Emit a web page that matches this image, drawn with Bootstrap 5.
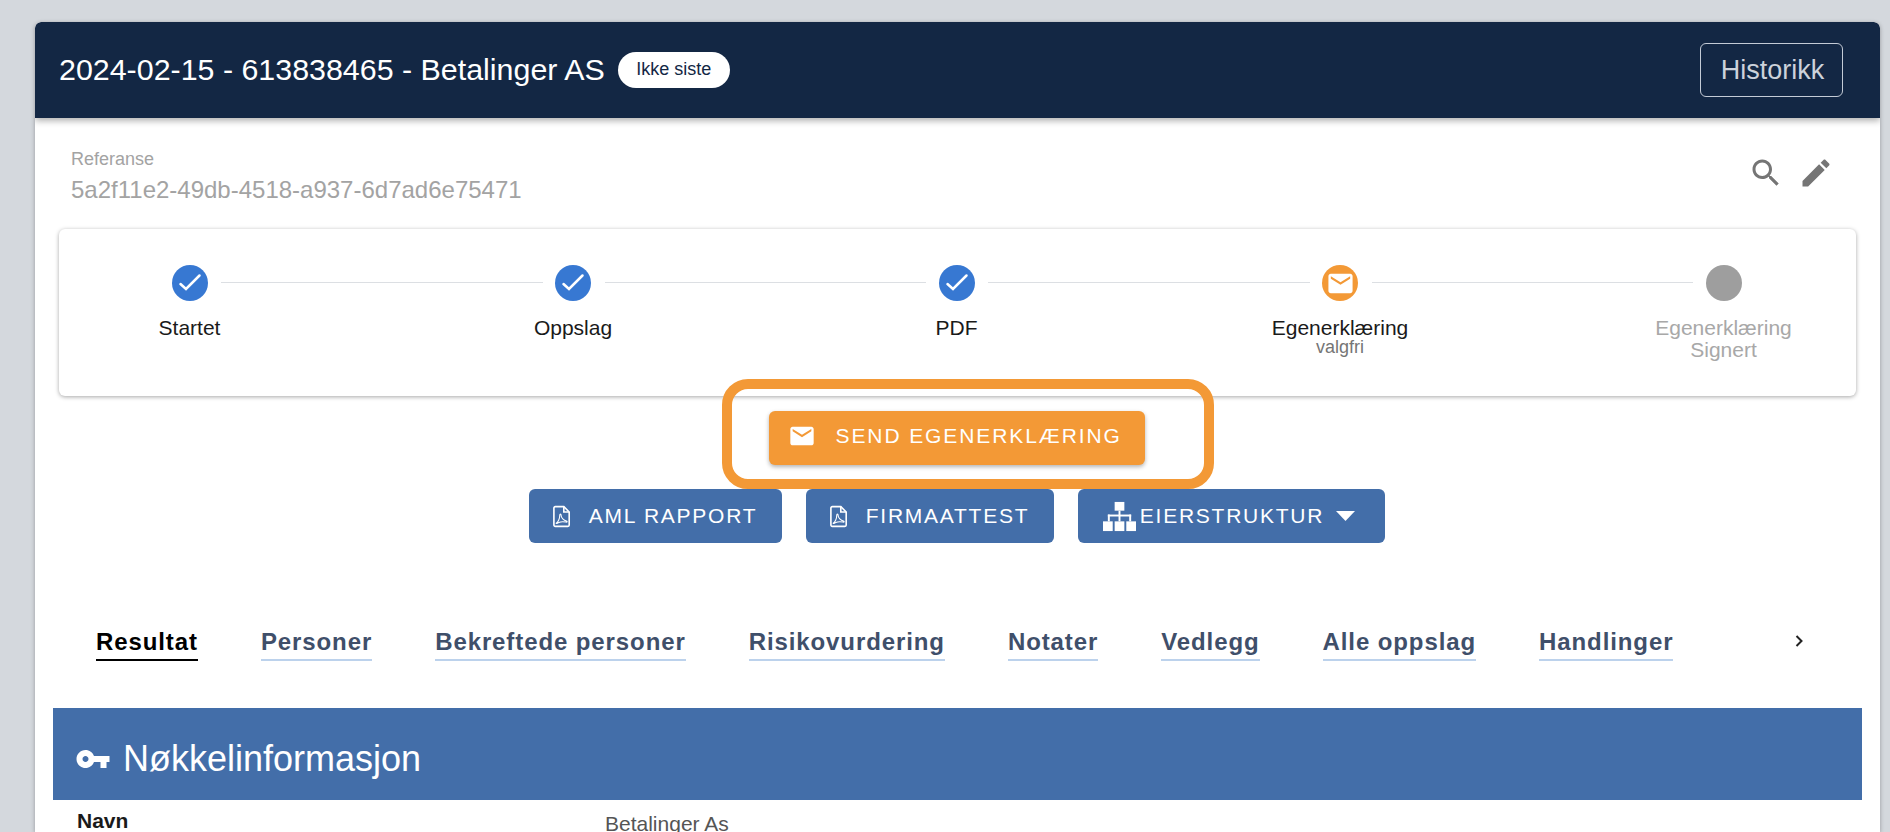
<!DOCTYPE html>
<html lang="nb">
<head>
  <meta charset="UTF-8">
  <meta name="viewport" content="width=device-width, initial-scale=1.0">
  <title>Betalinger AS</title>
  <link href="https://cdn.jsdelivr.net/npm/bootstrap@5.3.0/dist/css/bootstrap.min.css" rel="stylesheet">
  <style>
    html, body { height: 100%; overflow: hidden; }
    body {
      background: #d4d8dd;
      font-family: "Liberation Sans", Arial, sans-serif;
      padding: 22px 10px 0 35px;
    }

    .sak-card {
      border: 0;
      border-radius: 6px 6px 0 0;
      height: 810px;
      overflow: hidden;
      box-shadow: 0 1px 4px rgba(0, 0, 0, .3);
    }
    .sak-card > * { flex: none; }

    .sak-head {
      background: #132744;
      color: #fff;
      height: 96px;
      padding: 0 37px 0 24px;
      border: 0;
      border-radius: 6px 6px 0 0 !important;
      box-shadow: 0 3px 6px rgba(0, 0, 0, .3);
    }
    .sak-title { font-size: 30.4px; font-weight: 400; margin: 0 0 2px; }
    .pill-siste {
      background: #fff;
      color: #132744;
      font-size: 18px;
      height: 36px;
      width: 112px;
      border-radius: 18px;
      margin-left: 13px;
    }
    .btn-historikk {
      width: 143px;
      height: 54px;
      font-size: 27px;
      color: #ccd2db;
      border: 1px solid #c4cbd6;
      border-radius: 6px;
      padding: 0 0 0 2px;
    }

    .ref-row { padding: 31px 46px 0 36px; height: 111px; }
    .ref-label { font-size: 18px; color: #a3a3a3; line-height: 20px; }
    .ref-value { font-size: 24px; color: #a3a3a3; line-height: 30px; margin-top: 6px; }
    .ref-icons { gap: 14px; padding-top: 6px; color: #757575; }

    .stepper-paper {
      margin: 0 24px 0 24px;
      height: 167px;
      background: #fff;
      border-radius: 6px;
      padding: 36px 102px 0 100px;
      box-shadow: 0 1px 4px rgba(0, 0, 0, .35);
    }
    .step-item { width: 61px; flex: none; text-align: center; }
    .step-dot {
      width: 36px;
      height: 36px;
      border-radius: 50%;
      margin: 0 auto;
      background: #3778d2;
    }
    .step-dot.is-wait { background: #f39936; }
    .step-dot.is-off { background: #9e9e9e; }
    .step-line { flex: 1; height: 1px; background: #dcdfe3; margin: 17px 0 0 1px; }
    .step-label {
      margin: 16px -100px 0;
      font-size: 21px;
      line-height: 22px;
      color: #1a1a1a;
    }
    .step-label.is-off { color: #a8a8a8; }
    .step-sub { display: block; font-size: 18px; line-height: 16px; color: #757575; }

    .action-zone { position: relative; padding: 15px 2px 0 0; }
    .send-mark {
      position: absolute;
      left: 687px;
      top: -17px;
      width: 492px;
      height: 110px;
      border: 10px solid #f39936;
      border-radius: 26px;
      pointer-events: none;
    }
    .btn-act {
      height: 54px;
      color: #fff;
      font-size: 21px;
      letter-spacing: 1.75px;
      border: 0;
      border-radius: 6px;
      padding: 0;
      background: #436ea9;
      white-space: nowrap;
    }
    .btn-act:hover { background: #436ea9; color: #fff; }
    .btn-send {
      width: 376px;
      background: #f39936;
      letter-spacing: 1.9px;
      padding: 0 0 4px 19px;
      box-shadow: 0 2px 4px rgba(0, 0, 0, .3);
    }
    .btn-send:hover { background: #f39936; }
    .btn-send svg { margin-right: 20px; }
    .act-row { gap: 24px; margin-top: 24px; }
    .act-aml { width: 253px; }
    .act-firma { width: 248px; }
    .act-eier { width: 307px; padding-right: 4px; }
    .pdf-ico { margin-right: 18px; }
    .act-arrow { margin-left: 12px; }

    .tab-strip { margin: 85px 0 0 61px; height: 80px; position: relative; }
    .tab-item {
      font-size: 24px;
      font-weight: 700;
      letter-spacing: .9px;
      line-height: 28px;
      color: #3f4f6a;
      border-bottom: 2px solid #bcd2ec;
      padding-bottom: 3px;
      margin-right: 63px;
      white-space: nowrap;
      text-decoration: none;
    }
    .tab-item.is-on { color: #000; border-color: #000; }
    .tab-next { position: absolute; left: 1693px; top: 3px; }

    .section-bar {
      background: #436ea9;
      color: #fff;
      height: 92px;
      margin: 0 18px;
      padding: 10px 0 0 22px;
    }
    .section-bar h2 { font-size: 36px; font-weight: 400; margin: 0 0 0 12px; }
    .info-row { margin: 0 18px; padding: 11px 0 0 24px; }
    .info-key { width: 528px; font-size: 21px; font-weight: 700; color: #1a1a1a; line-height: 20px; }
    .info-val { font-size: 21px; color: #555; line-height: 26px; }
  </style>
</head>
<body>
  <div class="card sak-card">
    <div class="card-header sak-head d-flex align-items-center justify-content-between">
      <div class="d-flex align-items-center">
        <h1 class="sak-title">2024-02-15 - 613838465 - Betalinger AS</h1>
        <span class="pill-siste d-inline-flex align-items-center justify-content-center">Ikke siste</span>
      </div>
      <button type="button" class="btn btn-historikk">Historikk</button>
    </div>

    <!-- Referanse -->
    <div class="ref-row d-flex justify-content-between">
      <div>
        <div class="ref-label">Referanse</div>
        <div class="ref-value">5a2f11e2-49db-4518-a937-6d7ad6e75471</div>
      </div>
      <div class="ref-icons d-flex align-items-start">
        <svg width="36" height="36" viewBox="0 0 24 24" fill="currentColor"><path d="M15.5 14h-.79l-.28-.27C15.41 12.59 16 11.11 16 9.5 16 5.91 13.09 3 9.5 3S3 5.91 3 9.5 5.91 16 9.5 16c1.61 0 3.09-.59 4.23-1.57l.27.28v.79l5 4.99L20.49 19l-4.99-5zm-6 0C7.01 14 5 11.99 5 9.5S7.01 5 9.5 5 14 7.01 14 9.5 11.99 14 9.5 14z"/></svg>
        <svg width="36" height="36" viewBox="0 0 24 24" fill="currentColor"><path d="M3 17.25V21h3.75L17.81 9.94l-3.75-3.75L3 17.25zM20.71 7.04c.39-.39.39-1.02 0-1.41l-2.34-2.34c-.39-.39-1.02-.39-1.41 0l-1.83 1.83 3.75 3.75 1.83-1.83z"/></svg>
      </div>
    </div>

    <!-- Steg -->
    <div class="stepper-paper d-flex align-items-start">
      <div class="step-item">
        <div class="step-dot d-flex align-items-center justify-content-center">
          <svg width="24" height="24" viewBox="0 0 24 24" fill="none" stroke="#fff" stroke-width="2.5" stroke-linecap="round"><path d="M2.500 13l5.500 5L21.500 4.500"/></svg>
        </div>
        <div class="step-label">Startet</div>
      </div>
      <div class="step-line"></div>
      <div class="step-item">
        <div class="step-dot d-flex align-items-center justify-content-center">
          <svg width="24" height="24" viewBox="0 0 24 24" fill="none" stroke="#fff" stroke-width="2.5" stroke-linecap="round"><path d="M2.500 13l5.500 5L21.500 4.500"/></svg>
        </div>
        <div class="step-label">Oppslag</div>
      </div>
      <div class="step-line"></div>
      <div class="step-item">
        <div class="step-dot d-flex align-items-center justify-content-center">
          <svg width="24" height="24" viewBox="0 0 24 24" fill="none" stroke="#fff" stroke-width="2.5" stroke-linecap="round"><path d="M2.500 13l5.500 5L21.500 4.500"/></svg>
        </div>
        <div class="step-label">PDF</div>
      </div>
      <div class="step-line"></div>
      <div class="step-item">
        <div class="step-dot is-wait d-flex align-items-center justify-content-center">
          <svg width="29" height="29" viewBox="0 0 24 24" fill="#fff"><path d="M20 4H4c-1.1 0-1.99.9-1.99 2L2 18c0 1.1.9 2 2 2h16c1.1 0 2-.9 2-2V6c0-1.1-.9-2-2-2zm0 4l-8 5-8-5V6l8 5 8-5v2z"/></svg>
        </div>
        <div class="step-label">Egenerklæring<span class="step-sub">valgfri</span></div>
      </div>
      <div class="step-line"></div>
      <div class="step-item">
        <div class="step-dot is-off"></div>
        <div class="step-label is-off">Egenerklæring<br>Signert</div>
      </div>
    </div>

    <!-- Handlinger -->
    <div class="action-zone">
      <div class="d-flex justify-content-center">
        <button type="button" class="btn btn-act btn-send d-flex align-items-center">
          <svg width="28" height="28" viewBox="0 0 24 24" fill="#fff"><path d="M20 4H4c-1.1 0-1.99.9-1.99 2L2 18c0 1.1.9 2 2 2h16c1.1 0 2-.9 2-2V6c0-1.1-.9-2-2-2zm0 4l-8 5-8-5V6l8 5 8-5v2z"/></svg>
          SEND EGENERKLÆRING
        </button>
      </div>
      <div class="send-mark"></div>
      <div class="act-row d-flex justify-content-center">
        <button type="button" class="btn btn-act act-aml d-flex align-items-center justify-content-center">
          <svg class="pdf-ico" width="18" height="23" viewBox="0 0 20 24" fill="none" stroke="#fff" stroke-width="1.8"><path d="M2.5 1h9.5l6 6v14.5a1.5 1.5 0 0 1-1.5 1.5h-14A1.5 1.5 0 0 1 1 21.500v-19A1.500 1.500 0 0 1 2.500 1z"/><path d="M12 1v6h6" /><path stroke-width="1.2" d="M3.500 19.500c2-1 4-5 4-9 0-1.500 1.500-1.500 1.500 0 0 3 3 6 6 6.500 1 .2 1 1.500-.5 1.200-3-.5-6-.5-8 .5-1.500.8-3 1.500-3 .8z"/></svg>
          AML RAPPORT
        </button>
        <button type="button" class="btn btn-act act-firma d-flex align-items-center justify-content-center">
          <svg class="pdf-ico" width="18" height="23" viewBox="0 0 20 24" fill="none" stroke="#fff" stroke-width="1.8"><path d="M2.5 1h9.5l6 6v14.5a1.5 1.5 0 0 1-1.5 1.5h-14A1.5 1.5 0 0 1 1 21.500v-19A1.500 1.500 0 0 1 2.500 1z"/><path d="M12 1v6h6" /><path stroke-width="1.2" d="M3.500 19.500c2-1 4-5 4-9 0-1.500 1.500-1.500 1.500 0 0 3 3 6 6 6.500 1 .2 1 1.500-.5 1.200-3-.5-6-.5-8 .5-1.500.8-3 1.500-3 .8z"/></svg>
          FIRMAATTEST
        </button>
        <button type="button" class="btn btn-act act-eier d-flex align-items-center justify-content-center">
          <svg class="me-1" width="33" height="31" viewBox="0 0 34 30" fill="#fff"><rect x="12" y="0" width="10" height="9"/><rect x="16" y="9" width="2" height="11"/><rect x="5" y="13" width="24" height="2"/><rect x="5" y="13" width="2" height="7"/><rect x="27" y="13" width="2" height="7"/><rect x="0" y="20" width="10" height="10"/><rect x="12" y="20" width="10" height="10"/><rect x="24" y="20" width="10" height="10"/></svg>
          EIERSTRUKTUR
          <svg class="act-arrow" width="19" height="10" viewBox="0 0 19 10" fill="#fff"><path d="M0 0h19L9.500 10z"/></svg>
        </button>
      </div>
    </div>

    <!-- Faner -->
    <div class="tab-strip d-flex align-items-start">
      <a class="tab-item is-on" href="#">Resultat</a>
      <a class="tab-item" href="#">Personer</a>
      <a class="tab-item" href="#">Bekreftede personer</a>
      <a class="tab-item" href="#">Risikovurdering</a>
      <a class="tab-item" href="#">Notater</a>
      <a class="tab-item" href="#">Vedlegg</a>
      <a class="tab-item" href="#">Alle oppslag</a>
      <a class="tab-item" href="#">Handlinger</a>
      <svg class="tab-next" width="20" height="20" viewBox="0 0 20 20" fill="none" stroke="#222" stroke-width="2"><path d="M7.500 5l5 5-5 5"/></svg>
    </div>

    <div class="section-bar d-flex align-items-center">
      <svg width="36" height="36" viewBox="0 0 24 24" fill="#fff"><path d="M12.65 10C11.83 7.67 9.610 6 7 6c-3.310 0-6 2.690-6 6s2.690 6 6 6c2.610 0 4.830-1.670 5.650-4H17v4h4v-4h2v-4H12.650zM7 14c-1.100 0-2-.9-2-2s.9-2 2-2 2 .9 2 2-.9 2-2 2z"/></svg>
      <h2>Nøkkelinformasjon</h2>
    </div>
    <div class="info-row d-flex">
      <div class="info-key">Navn</div>
      <div class="info-val">Betalinger As</div>
    </div>
  </div>
</body>
</html>
